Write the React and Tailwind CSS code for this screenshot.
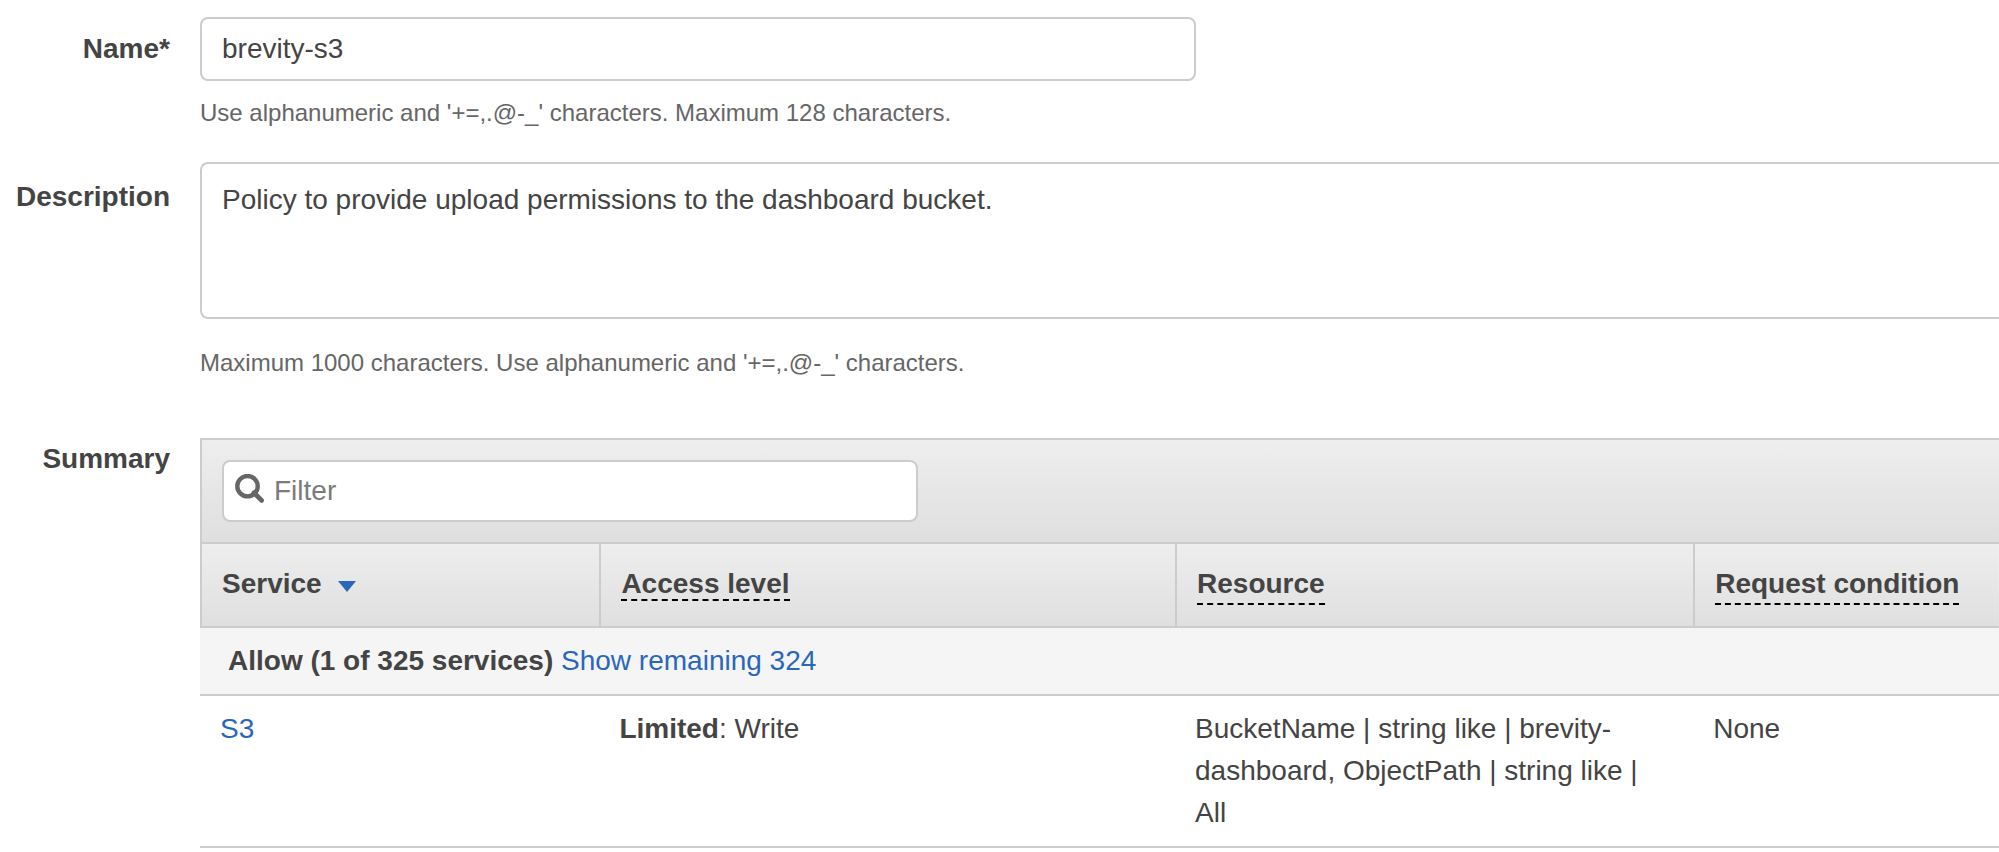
/**
 * App.jsx: review step of the policy editor
 * Name, description and a summary table of the permissions
 */

const columns = [
  { id: 'access', title: 'Access level', width: 'w-[32%]', underline: 'leading-7' },
  { id: 'resource', title: 'Resource', width: 'w-[28.8%]', underline: 'pb-1 leading-8' },
  { id: 'condition', title: 'Request condition', width: 'w-[17%]', underline: 'pb-1 leading-8' },
];

const services = [
  {
    name: 'S3',
    level: 'Limited',
    access: 'Write',
    resource: 'BucketName | string like | brevity-dashboard, ObjectPath | string like | All',
    condition: 'None',
  },
];

function SearchIcon({ className }) {
  return (
    <svg className={className} viewBox="0 0 30 30" fill="none" stroke="currentColor" aria-hidden="true">
      <circle cx="12.5" cy="12.2" r="10.2" strokeWidth="4.4" />
      <path d="M19 18.8 26.6 26.4" strokeWidth="4.8" strokeLinecap="round" />
    </svg>
  );
}

function Row({ label, htmlFor, className, labelClass, children }) {
  return (
    <div className={`flex ${className}`}>
      <div className={`w-[170px] shrink-0 text-right font-bold ${labelClass}`}>
        {htmlFor ? <label htmlFor={htmlFor}>{label}</label> : <h2>{label}</h2>}
      </div>
      <div className="ml-[30px] min-w-0 flex-1">{children}</div>
    </div>
  );
}

function SummaryTable() {
  return (
    <div>
      {/* Filter bar */}
      <div className="border-t-2 border-l-2 border-[#ccc] bg-linear-to-b from-[#eee] to-[#dfdfdf] px-5 py-5">
        <div className="relative w-[696px] max-w-full">
          <SearchIcon className="absolute top-[14px] left-[13px] size-[30px] text-[#666]" />
          <input
            type="text"
            aria-label="Filter"
            placeholder="Filter"
            className="block h-[62px] w-full rounded-lg border-2 border-[#ccc] bg-white pr-4 pl-[50px] placeholder:text-[#7b7b7b]"
          />
        </div>
      </div>

      <table className="w-full table-fixed border-separate border-spacing-0 text-left">
        <thead>
          <tr className="h-[86px] bg-linear-to-b from-[#eee] to-[#dfdfdf]">
            <th className="w-[22.2%] border-y-2 border-l-2 border-[#ccc] px-5 pb-[2px]">
              <button type="button" className="flex items-center font-bold">
                Service
                <svg className="mt-1 ml-4 h-[11px] w-[18px]" viewBox="0 0 18 11" aria-hidden="true">
                  <path d="M0 0H18L9 11Z" fill="#2a67bb" />
                </svg>
              </button>
            </th>
            {columns.map((col) => (
              <th key={col.id} className={`border-y-2 border-l-2 border-[#ccc] px-5 pb-[2px] ${col.width}`}>
                <span className={`border-b-2 border-dashed border-black ${col.underline}`}>{col.title}</span>
              </th>
            ))}
          </tr>
        </thead>
        <tbody>
          <tr className="bg-[#f5f5f5]">
            <td colSpan={4} className="border-b-2 border-[#ccc] py-3 pl-7">
              <strong>Allow (1 of 325 services)</strong>{' '}
              <a href="#remaining" className="text-[#2a67bb]">Show remaining 324</a>
            </td>
          </tr>
          {services.map((service) => (
            <tr key={service.name} className="align-top">
              <td className="border-b-2 border-[#ccc] px-5 py-3">
                <a href="#s3" className="text-[#2a67bb]">{service.name}</a>
              </td>
              <td className="border-b-2 border-[#ccc] px-5 py-3">
                <strong>{service.level}</strong>: {service.access}
              </td>
              <td className="border-b-2 border-[#ccc] px-5 py-3">{service.resource}</td>
              <td className="border-b-2 border-[#ccc] px-5 py-3">{service.condition}</td>
            </tr>
          ))}
        </tbody>
      </table>
    </div>
  );
}

export default function App() {
  return (
    <main className="overflow-hidden bg-white font-['Liberation_Sans',Arial,sans-serif] text-[28px] leading-[42px] text-[#444]">
      <Row label="Name*" htmlFor="name" className="pt-[17px]" labelClass="pt-[11px]">
        <input
          id="name"
          type="text"
          defaultValue="brevity-s3"
          className="block h-[64px] w-[996px] max-w-full rounded-lg border-2 border-[#ccc] px-5"
        />
        <p className="mt-[11px] text-[24px] text-[#666]">
          Use alphanumeric and '+=,.@-_' characters. Maximum 128 characters.
        </p>
      </Row>

      <Row label="Description" htmlFor="description" className="pt-[28px]" labelClass="pt-[14px]">
        <textarea
          id="description"
          defaultValue="Policy to provide upload permissions to the dashboard bucket."
          className="block h-[157px] w-full resize-none rounded-l-lg border-2 border-r-0 border-[#ccc] px-5 py-[15px]"
        />
        <p className="mt-[23px] text-[24px] text-[#666]">
          Maximum 1000 characters. Use alphanumeric and '+=,.@-_' characters.
        </p>
      </Row>

      <Row label="Summary" className="pt-[54px]" labelClass="">
        <SummaryTable />
      </Row>
    </main>
  );
}
